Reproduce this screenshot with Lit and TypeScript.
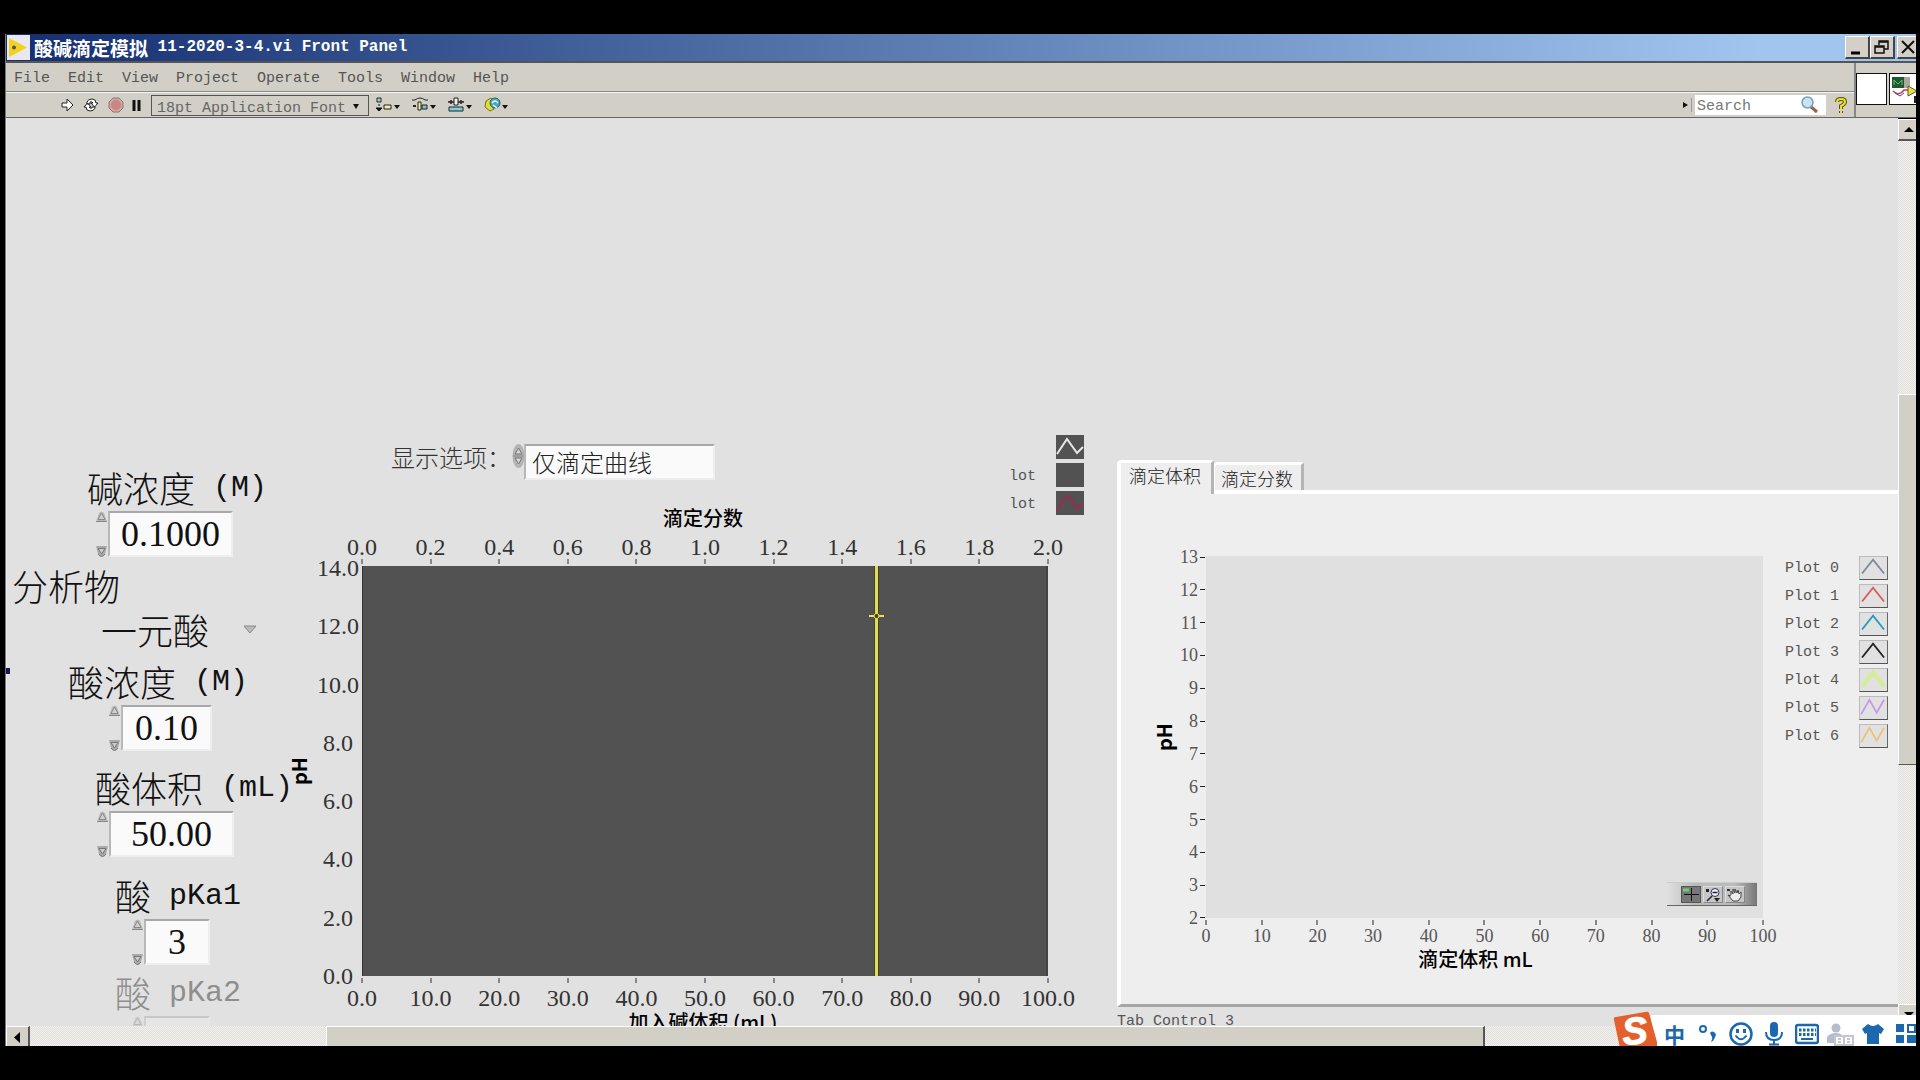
import { LitElement, html, css, svg } from "lit";
import { customElement, property } from "lit/decorators.js";

const range = (n: number) => Array.from({ length: n }, (_, i) => i);

const shared = css`
  :host, * { box-sizing: border-box; }
  button, input, select {
    margin: 0; padding: 0; border: 0; border-radius: 0; background: none;
    color: inherit; font: inherit; appearance: none; outline: none;
  }
  button { display: block; }
  svg { display: block; }
`;

/* Numeric control: label, increment buttons and value box. */
@customElement("numeric-control")
export class NumericControl extends LitElement {
  @property() zh = "";
  @property() unit = "";
  @property() value = "";
  @property({ type: Boolean }) disabled = false;

  static styles = [shared, css`
    :host { display: block; color: #111; }
    :host([disabled]) { color: #8e8e8e; }
    .label {
      display: flex; height: 44px; white-space: pre;
      font: 300 36px/40px "Noto Sans CJK SC", sans-serif;
    }
    .unit { font: 30px/42px "Liberation Mono", monospace; }
    .row { display: flex; margin-left: var(--indent, 8px); }
    .spin { display: flex; flex-direction: column; justify-content: space-between; width: 13px; height: 46px; }
    .box {
      width: var(--box, 125px); height: 46px; text-align: center;
      background: #fafafa; border: 2px solid #eee; border-top-color: #a8a8a8; border-left-color: #b8b8b8;
      font: 36px/42px "Liberation Serif", serif;
    }
    :host([disabled]) .row { opacity: 0.45; }
    :host([disabled]) .box { background: #ededed; }
  `];

  render() {
    return html`
      <label class="label" for="v">${this.zh}<span class="unit">${this.unit}</span></label>
      <div class="row">
        <div class="spin">
          <button aria-label="Increment" ?disabled=${this.disabled}>
            <svg width="13" height="11"><path d="M1 11L4 2Q6.500-1 9 2L12 11Z" fill="#b8b8b8"/><path d="M3 8.500L6.500 2L10 8.500Z" fill="#d0d0d0" stroke="#888"/><path d="M1 10.500H12" stroke="#888"/></svg>
          </button>
          <button aria-label="Decrement" ?disabled=${this.disabled}>
            <svg width="13" height="11"><path d="M1 0H12L10 8Q6.500 13 3 8Z" fill="#aaa"/><path d="M3 2.500H10L6.500 8Z" fill="#ccc" stroke="#777"/><path d="M10 8Q6.500 13 3 8" fill="none" stroke="#777"/></svg>
          </button>
        </div>
        <input class="box" id="v" .value=${this.value} ?disabled=${this.disabled} />
      </div>`;
  }
}

/* Main titration graph with a top and a bottom scale. */
@customElement("titration-graph")
export class TitrationGraph extends LitElement {
  static styles = [shared, css`
    :host { display: block; min-width: 0; padding-top: 317px; color: #333; }
    .head { display: flex; justify-content: space-between; height: 71px; padding: 0 33px 0 110px; }
    .option { display: flex; padding-top: 8px; }
    .option label { width: 121px; font: 300 24px/28px "Noto Sans CJK SC", sans-serif; white-space: nowrap; }
    .option svg { margin-right: -1px; }
    .ring {
      width: 191px; height: 36px; padding-left: 6px; margin-top: 1px; color: #222;
      background: #fafafa; border: 2px solid #eee; border-top-color: #a8a8a8; border-left-color: #b8b8b8;
      font: 300 24px/32px "Noto Sans CJK SC", sans-serif;
    }
    .legend { display: grid; grid-template-columns: 47px 28px; grid-auto-rows: 24px; row-gap: 4px; font: 15px/28px "Liberation Mono", monospace; color: #555; }
    .swatch { height: 24px; background: #525252; }
    .title { text-align: center; color: #000; font: 500 20px/24px "Noto Sans CJK SC", sans-serif; white-space: nowrap; padding: 0 73px 0 81px; }
    .title.top { height: 29px; }
    .scale { display: flex; justify-content: space-between; margin: 0 69px 0 81px; font: 24px/24px "Liberation Serif", serif; }
    .mark { display: flex; flex-direction: column; align-items: center; width: 0; white-space: nowrap; }
    .tick { width: 2px; height: 5px; flex: none; background: #888; }
    .scale.top { padding-bottom: 2px; }
    .scale.bottom { padding-top: 2px; }
    .scale.bottom .tick { margin-bottom: 3px; }
    .body { display: grid; grid-template-columns: 36px 42px 1fr; padding-right: 69px; height: 410px; }
    .ph { display: flex; align-items: center; justify-content: center; }
    .ph span { writing-mode: vertical-rl; transform: rotate(180deg); color: #000; font: 700 20px/24px "Noto Sans CJK SC", sans-serif; }
    .ys { display: flex; flex-direction: column; justify-content: space-between; padding-top: 2px; font: 24px/24px "Liberation Serif", serif; }
    .y { height: 0; display: flex; align-items: center; justify-content: center; white-space: nowrap; }
    .plot { margin-left: 3px; background: #525252; border-left: 1px solid #333; border-right: 2px solid #444; display: grid; grid-template-columns: 3fr 1fr; }
    .cursor { display: flex; justify-content: flex-end; }
    .line { width: 5px; margin-right: -4px; background: #e0dc62; border: solid #45431c; border-width: 0 1px; padding-top: 45px; display: flex; justify-content: center; align-items: flex-start; }
    .line svg { flex: none; }
  `];

  render() {
    return html`
      <div class="head">
        <div class="option">
          <label for="display">显示选项：</label>
          <svg width="13" height="26"><ellipse cx="6.500" cy="13" rx="6" ry="12" fill="#b4b4b4"/><path d="M6.500 5L10 11H3ZM6.500 21L10 15H3Z" fill="#d5d5d5" stroke="#777"/><path d="M1 13H12" stroke="#888"/></svg>
          <select class="ring" id="display"><option>仅滴定曲线</option></select>
        </div>
        <div class="legend">
          <span></span>
          <svg class="swatch" width="28" height="24"><path d="M1 19L11 4L21 18L27 12" fill="none" stroke="#e8e8e8" stroke-width="2"/></svg>
          <span>lot</span><div class="swatch"></div>
          <span>lot</span>
          <svg class="swatch" width="28" height="24"><path d="M1 20L6 11L12 5L21 17L27 13" fill="none" stroke="#863750" stroke-width="3"/></svg>
        </div>
      </div>
      <div class="title top">滴定分数</div>
      <div class="scale top">${range(11).map(i => html`<div class="mark"><span>${(i * 0.2).toFixed(1)}</span><i class="tick"></i></div>`)}</div>
      <div class="body">
        <div class="ph"><span>pH</span></div>
        <div class="ys">${range(8).map(i => html`<div class="y">${(14 - i * 2).toFixed(1)}</div>`)}</div>
        <div class="plot"><div class="cursor"><div class="line">
          <svg width="15" height="10"><path d="M0 5H15" stroke="#e8e45a" stroke-width="2"/><circle cx="7.500" cy="5" r="2.500" fill="#45431c" stroke="#e8e45a"/></svg>
        </div></div></div>
      </div>
      <div class="scale bottom">${range(11).map(i => html`<div class="mark"><i class="tick"></i><span>${(i * 10).toFixed(1)}</span></div>`)}</div>
      <div class="title">加入碱体积 (mL)</div>`;
  }
}

const PLOTS = [
  { color: "#8088a0", width: 2, d: "M3 19L15 4L27 19" },
  { color: "#dd5a5a", width: 2, d: "M3 19L15 4L27 19" },
  { color: "#1f9cc0", width: 2, d: "M3 19L15 4L27 19" },
  { color: "#222222", width: 2, d: "M3 19L15 4L27 19" },
  { color: "#d3ec9e", width: 5, d: "M3 20L15 5L27 20" },
  { color: "#c59be8", width: 2, d: "M2 20L11 4L19 18L27 4" },
  { color: "#ecc27a", width: 2, d: "M2 20L11 4L19 18L27 4" },
];

/* Tab control holding the second graph. */
@customElement("tab-panel")
export class TabPanel extends LitElement {
  static styles = [shared, css`
    :host { display: block; min-width: 0; padding-top: 342px; color: #555; }
    .tabs { display: flex; align-items: flex-end; height: 34px; font: 300 18px/20px "Noto Sans CJK SC", sans-serif; color: #222; }
    .tab { background: #eee; border: 3px solid #fff; border-bottom: 0; border-right-color: #b4b4b4; border-radius: 4px 3px 0 0; white-space: nowrap; }
    .tab.on { width: 97px; height: 34px; padding: 0 6px 8px 4px; border-left-width: 4px; align-self: flex-start; }
    .tab.off { width: 90px; height: 28px; padding-right: 2px; margin-bottom: 4px; border-left-width: 1px; }
    .strip { display: flex; margin-top: -4px; padding-left: 97px; height: 4px; }
    .strip i { flex: 1; background: #fff; }
    .panel { height: 513px; padding-top: 62px; background: #eee; border-left: 4px solid #fff; border-bottom: 3px solid #a6a6a6; display: grid; grid-template-columns: 85px minmax(0, 1fr) 135px; }
    .name { padding-top: 5px; font: 15px/20px "Liberation Mono", monospace; }
    .left { display: grid; grid-template-columns: 1fr 26px; height: 362px; }
    .ph { display: flex; align-items: center; justify-content: center; padding-left: 26px; }
    .ph span { writing-mode: vertical-rl; transform: rotate(180deg); color: #000; font: 700 20px/24px "Noto Sans CJK SC", sans-serif; }
    .ys { display: flex; flex-direction: column; justify-content: space-between; padding-top: 1px; font: 18px/18px "Liberation Serif", serif; }
    .y { display: flex; align-items: center; justify-content: flex-end; height: 0; gap: 2px; padding-right: 1px; }
    .y i { width: 5px; height: 1px; background: #222; }
    .plot { height: 362px; background: #e0e0e0; display: flex; align-items: flex-end; justify-content: flex-end; padding: 0 6px 12px; }
    .palette { display: flex; align-items: center; gap: 2px; width: 90px; height: 24px; padding-left: 14px; background: linear-gradient(90deg, #e0e0e0, #bbb 30%, #bbb 75%, #777); border-bottom: 1px solid #666; border-top: 1px solid #ccc; }
    .tool { width: 20px; height: 17px; background: #c6c6c6; border: 1px solid #ddd; border-right-color: #888; border-bottom-color: #888; }
    .tool.on { background: #777; border-color: #555; }
    .scale { display: flex; justify-content: space-between; padding-top: 2px; font: 18px/20px "Liberation Serif", serif; }
    .mark { display: flex; flex-direction: column; align-items: center; width: 0; white-space: nowrap; }
    .mark i { width: 2px; height: 5px; margin-bottom: 1px; background: #888; }
    .title { text-align: center; color: #000; font: 500 20px/26px "Noto Sans CJK SC", sans-serif; white-space: nowrap; padding-right: 18px; }
    .legend { display: grid; align-content: start; grid-template-columns: 74px 29px; grid-auto-rows: 24px; row-gap: 4px; padding-left: 22px; font: 15px/26px "Liberation Mono", monospace; white-space: pre; }
    .swatch { background: #e1e1e1; border: 1px solid #bbb; border-right-color: #666; border-bottom-color: #555; }
  `];

  render() {
    return html`
      <div class="tabs" role="tablist">
        <button class="tab on" role="tab" aria-selected="true">滴定体积</button>
        <button class="tab off" role="tab" aria-selected="false">滴定分数</button>
      </div>
      <div class="strip"><i></i></div>
      <div class="panel">
        <div class="left">
          <div class="ph"><span>pH</span></div>
          <div class="ys">${range(12).map(i => html`<div class="y"><span>${13 - i}</span><i></i></div>`)}</div>
        </div>
        <div>
          <div class="plot">
            <div class="palette">
              <button class="tool on" aria-label="Cursor"><svg width="18" height="15"><path d="M1 3H7" stroke="#6fd06f" stroke-width="3"/><path d="M2 7.500H17M9.500 1V14" stroke="#111"/></svg></button>
              <button class="tool" aria-label="Zoom"><svg width="18" height="15"><circle cx="11" cy="5.500" r="4" fill="#eef" stroke="#335"/><path d="M8.500 5.500H13.500M8 9L3 14" stroke="#223" stroke-width="1.500"/><path d="M2 2H5V5H2ZM10 11H16L13 15Z" fill="#222"/></svg></button>
              <button class="tool" aria-label="Pan"><svg width="18" height="15"><path d="M5 8V4L7 7V2L9 6V2L11 6L12 3L13 7L15 5V10L12 14H7L2 8L5 9" fill="#eee" stroke="#444"/><path d="M1 2H4V4H1Z" fill="#333"/></svg></button>
            </div>
          </div>
          <div class="scale">${range(11).map(i => html`<div class="mark"><i></i><span>${i * 10}</span></div>`)}</div>
          <div class="title">滴定体积 mL</div>
        </div>
        <div class="legend">${PLOTS.map((p, i) => html`<span>Plot ${i}</span><svg class="swatch" width="29" height="24" viewBox="1 1 29 24">${svg`<path d=${p.d} fill="none" stroke=${p.color} stroke-width=${p.width}/>`}</svg>`)}</div>
      </div>
      <div class="name">Tab Control 3</div>`;
  }
}

/* Input-method status bar lying over the window corner. */
@customElement("ime-bar")
export class ImeBar extends LitElement {
  static styles = [shared, css`
    :host { display: flex; width: 303px; height: 35px; overflow: hidden; align-items: flex-end; }
    .logo { flex: none; width: 45px; height: 35px; position: relative; z-index: 1; }
    .letter { font: italic 700 38px "Liberation Sans", sans-serif; }
    .cells { flex: none; display: flex; height: 31px; margin-left: -7px; padding-left: 7px; background: #fff; }
    .cell { width: 33px; height: 31px; display: flex; align-items: center; justify-content: center; padding-top: 6px; }
    .zh { color: #1b68ae; font: 700 21px/24px "Noto Sans CJK SC", sans-serif; }
  `];

  render() {
    const b = "#1b68ae";
    return html`
      <svg class="logo" viewBox="0 0 45 35">
        <path d="M3 6Q0 6 1 9L7 37H44V31L36 2Q35 0 32 1Z" fill="#e3602c"/>
        <text class="letter" x="9" y="33" fill="#fff" stroke="#fff" transform="rotate(-6 22 20)">S</text>
      </svg>
      <div class="cells">
        <button class="cell zh">中</button>
        <button class="cell" aria-label="Punctuation"><svg width="22" height="24"><circle cx="6" cy="7" r="3" fill="none" stroke=${b} stroke-width="2"/><path d="M13 11a3 3 0 1 1 5 4q-1 4-4 5q2-3 1-5z" fill=${b}/></svg></button>
        <button class="cell" aria-label="Emoji"><svg width="24" height="24"><circle cx="12" cy="12" r="10.500" fill="none" stroke=${b} stroke-width="2.500"/><path d="M8.500 7V11M15.500 7V11" stroke=${b} stroke-width="3"/><path d="M6.500 13.500Q12 21 17.500 13.500" fill="none" stroke=${b} stroke-width="2"/></svg></button>
        <button class="cell" aria-label="Voice"><svg width="20" height="24"><rect x="6" y="0" width="8" height="15" rx="4" fill=${b}/><path d="M2 10Q2 18 10 18Q18 18 18 10M10 18V22M5 22.500H15" fill="none" stroke=${b} stroke-width="2"/></svg></button>
        <button class="cell" aria-label="Keyboard"><svg width="24" height="24"><rect x="1" y="3" width="22" height="18" rx="2" fill="none" stroke=${b} stroke-width="2.500"/><path d="M4 8H21M4 12.500H21" stroke=${b} stroke-width="3" stroke-dasharray="2.500 1.500"/><path d="M6 17H18" stroke=${b} stroke-width="2"/></svg></button>
        <button class="cell" aria-label="Account"><svg width="28" height="24"><circle cx="10" cy="6" r="4.500" fill="#b4bccd"/><path d="M1 21V15Q4 11 10 11Q14 11 16 13V21Z" fill="#b4bccd"/><path d="M9 14H17L18 15L19 14H27V23H9ZM18 15V23M12 17H15M21 17H24M12 20H15M21 20H24" fill="#fff" stroke="#c0c6d2" stroke-width="2"/></svg></button>
        <button class="cell" aria-label="Skin"><svg width="22" height="24"><path d="M6 2Q11 6 16 2L22 7L19 12L17 11V22H5V11L3 12L0 7Z" fill=${b}/></svg></button>
        <button class="cell" aria-label="Toolbox"><svg width="22" height="24"><path d="M1 2H9V10H1ZM1 13H9V21H1ZM12 13H22V21H12Z" fill=${b}/><rect x="13" y="3" width="7" height="7" fill="none" stroke=${b} stroke-width="2"/></svg></button>
      </div>`;
  }
}

@customElement("app-root")
export class AppRoot extends LitElement {
  static styles = [shared, css`
    :host { display: flex; flex-direction: column; height: 100vh; padding: 34px 4px 34px 5px; background: #000; overflow: hidden; }
    .window { position: relative; flex: 1; min-height: 0; display: flex; flex-direction: column; overflow: hidden; border-left: 1px solid #777; }
    .title { display: flex; align-items: center; height: 27px; flex: none; padding-left: 1px; background: linear-gradient(90deg, #142e70, #a0c6f0 92%); color: #fff; }
    .app-icon { flex: none; margin-right: 4px; }
    .title h1 { flex: 1; display: flex; margin: 0; font: 700 19px/25px "Noto Sans CJK SC", sans-serif; white-space: pre; }
    .title .en { font: 700 16px/25px "Liberation Mono", monospace; }
    .wbtn { width: 25px; height: 23px; background: #d4d0c8; border: 1px solid #fff; border-right: 2px solid #444; border-bottom: 2px solid #444; }
    .wbtn.close { margin: 0 -6px 0 2px; }
    .bars { display: flex; height: 57px; flex: none; background: #d2cfc7; border-top: 2px solid #555; border-bottom: 1px solid #666; color: #444; }
    .main { flex: 1; min-width: 0; display: flex; flex-direction: column; border-right: 2px solid #888; }
    .menu { display: flex; gap: 18px; height: 29px; padding-left: 8px; border-bottom: 1px solid #888; }
    .menu button { padding-top: 2px; color: #555; font: 15px/28px "Liberation Mono", monospace; }
    .tools { display: flex; align-items: center; height: 25px; border-top: 1px solid #f4f4f4; padding-left: 55px; }
    .tools > svg, .tools button { flex: none; }
    .tbtn { margin-right: 9px; }
    .tbtn.narrow { margin-right: 8px; }
    .tbtn.wide { margin-right: 12px; }
    .font { width: 218px; height: 21px; margin-right: 7px; border: 1px solid #555; overflow: hidden; display: flex; }
    .font select { flex: none; width: 216px; height: 26px; padding-left: 5px; font: 15px/26px "Liberation Mono", monospace; color: #666; }
    .font svg { margin: 7px 6px 0 -16px; flex: none; }
    .space { flex: 1; }
    .search { display: flex; align-items: center; width: 131px; height: 20px; margin-right: 9px; background: #fff; }
    .search input { flex: 1; min-width: 0; padding: 3px 0 0 2px; font: 15px/17px "Liberation Mono", monospace; }
    .search input::placeholder { color: #777; opacity: 1; }
    .search svg { margin-right: 6px; }
    .help { margin-right: 7px; }
    .side { display: flex; align-items: flex-start; gap: 2px; width: 60px; padding-top: 10px; overflow: hidden; }
    .pane { flex: none; width: 31px; height: 32px; background: #fff; border: 1px solid #111; }
    .work { flex: 1; min-height: 0; display: flex; }
    .canvas { flex: 1; min-width: 0; overflow: hidden; display: grid; grid-template-columns: 274px minmax(0, 836fr) minmax(0, 781fr); background: #e1e1e1; border-left: 1px solid #eee; }
    .controls { padding-top: 349px; }
    .c1 { margin: 0 0 7px 80px; }
    .c2 { margin: 0 0 16px 61px; --indent: 40px; --box: 91px; }
    .c3 { margin: 0 0 18px 88px; --indent: 1px; }
    .c4 { margin: 0 0 7px 108px; --indent: 16px; --box: 66px; }
    .analyte { margin-bottom: 9px; color: #111; font: 300 36px/42px "Noto Sans CJK SC", sans-serif; }
    .analyte label { display: block; height: 44px; padding-left: 5px; }
    .pick { display: flex; align-items: center; height: 44px; padding-left: 94px; }
    .pick select { width: 142px; height: 40px; margin-bottom: 4px; }
    .track { background-color: #eceae6; background-image: repeating-conic-gradient(#e2dfda 0 25%, #f2f0ee 0 50%); background-size: 2px 2px; }
    .thumb { background: #d2cfc7; border: 1px solid #fff; border-right: 2px solid #555; border-bottom: 1px solid #555; }
    .vbar { width: 18px; flex: none; display: flex; flex-direction: column; overflow: hidden; padding-top: 1px; }
    .vbar button, .hbar button { flex: none; background: #d4d0c8; border: 1px solid #fff; border-right: 2px solid #555; border-bottom: 2px solid #555; }
    .vbar button { width: 23px; height: 22px; }
    .vbar .a { flex: 253; } .vbar .b { flex: 370; width: 20px; } .vbar .c { flex: 239; }
    .hbar { height: 20px; flex: none; display: flex; overflow: hidden; }
    .hbar button { width: 24px; height: 22px; }
    .hbar .a { flex: 296; } .hbar .b { flex: 1158; height: 24px; } .hbar .c { flex: 431; }
    .handle { position: absolute; left: 0; top: 634px; width: 4px; height: 6px; background: #15155a; }
    ime-bar { position: absolute; right: 0; bottom: 0; }
  `];

  render() {
    const caret = svg`<path d="M18 9H24L21 13Z" fill="#111"/>`;
    return html`
      <div class="window">
        <header class="title">
          <svg class="app-icon" width="23" height="25"><rect width="23" height="25" fill="#e8e8ee"/><path d="M2 3L20 12.500L2 22Z" fill="#f3d21c"/><circle cx="7" cy="12.500" r="2" fill="#555"/></svg>
          <h1>酸碱滴定模拟<span class="en"> 11-2020-3-4.vi Front Panel</span></h1>
          <button class="wbtn" aria-label="Minimize"><svg width="22" height="20"><path d="M5 16H14" stroke="#000" stroke-width="3"/></svg></button>
          <button class="wbtn" aria-label="Restore"><svg width="22" height="20"><path d="M8 8V4H17V12H13M8 5H17M4 9H13V16H4ZM4 10H13" fill="none" stroke="#111" stroke-width="1.500"/></svg></button>
          <button class="wbtn close" aria-label="Close"><svg width="22" height="20"><path d="M4 4L16 16M16 4L4 16" stroke="#111" stroke-width="2"/></svg></button>
        </header>
        <div class="bars">
          <div class="main">
            <nav class="menu">${["File", "Edit", "View", "Project", "Operate", "Tools", "Window", "Help"].map(m => html`<button>${m}</button>`)}</nav>
            <div class="tools">
              <button class="tbtn" aria-label="Run"><svg width="13" height="14"><path d="M1 5H6V1L12 7L6 13V9H1Z" fill="#fff" stroke="#222"/></svg></button>
              <button class="tbtn" aria-label="Run continuously"><svg width="16" height="14"><path d="M4 6V4Q5 1 9 1Q13 1 13 5H15L11.500 9L8 5H10Q9 3 7 4V6ZM12 9V10Q11 13 7 13Q3 13 3 9H1L4.500 5L8 9H6Q7 11 9 10V9Z" fill="#fff" stroke="#222"/></svg></button>
              <button class="tbtn narrow" aria-label="Abort"><svg width="16" height="16"><path d="M5 1H11L15 5V11L11 15H5L1 11V5Z" fill="#d0a5a2" stroke="#8c7878"/><circle cx="8" cy="8" r="5" fill="#c98682"/></svg></button>
              <button class="tbtn" aria-label="Pause"><svg width="10" height="12"><path d="M2 1V12M7 1V12" stroke="#111" stroke-width="3"/></svg></button>
              <div class="font">
                <select aria-label="Text settings"><option>18pt Application Font</option></select>
                <svg width="10" height="8"><path d="M1 1H7L4 6Z" fill="#111"/></svg>
              </div>
              <button class="tbtn wide" aria-label="Align objects"><svg width="24" height="18">${svg`<path d="M1 2H5V6H1Z" fill="#9fd4e0" stroke="#222"/><path d="M3 8V10M0 12H6L3 15Z" fill="#111" stroke="#111"/><path d="M8 9H15V13H8Z" fill="#f0eea0" stroke="#222"/>`}${caret}</svg></button>
              <button class="tbtn wide" aria-label="Distribute objects"><svg width="24" height="18">${svg`<path d="M0 4H3Q8 0 13 4H16" fill="none" stroke="#222"/><path d="M6 6H9V14H6Z" fill="#f0eea0" stroke="#222"/><path d="M10 9H15V13H10Z" fill="#7cc3d0" stroke="#222"/><path d="M1 9H4V11H1Z" fill="#222"/>`}${caret}</svg></button>
              <button class="tbtn wide" aria-label="Resize objects"><svg width="24" height="18">${svg`<path d="M0 6H16M3 4V8M13 4V8" stroke="#222" stroke-width="1.500"/><path d="M6 2H10V9H6Z" fill="#eee" stroke="#222"/><path d="M1 11H15V15H1Z" fill="#7cd0de" stroke="#222"/>`}${caret}</svg></button>
              <button class="tbtn wide" aria-label="Reorder"><svg width="25" height="18">${svg`<path d="M2 5L7 2L9 5L7 9L10 13L6 15L1 11Z" fill="#e0dc3c" stroke="#777410"/><circle cx="11" cy="7" r="5" fill="#4fa5b8" stroke="#24606e"/><path d="M8 7Q11 3 14 7M9 9L13 12" fill="none" stroke="#dff" stroke-width="1.500"/>`}${caret}</svg></button>
              <span class="space"></span>
              <svg width="12" height="16"><path d="M0 5L5 8L0 11Z" fill="#111"/><path d="M8.500 1V15" stroke="#999"/></svg>
              <div class="search">
                <input aria-label="Search" placeholder="Search" />
                <svg width="20" height="18"><path d="M10 10L17 16" stroke="#9a6350" stroke-width="3"/><circle cx="7.500" cy="6.500" r="5.500" fill="#c5e4f4" stroke="#7b9fb5" stroke-width="1.500"/></svg>
              </div>
              <button class="help" aria-label="Help"><svg width="12" height="17"><path d="M2 5Q2 2 6 2Q10 2 10 5Q10 7 6 9V12M6 14V16" fill="none" stroke="#57530c" stroke-width="4"/><path d="M2 5Q2 2 6 2Q10 2 10 5Q10 7 6 9V12M6 14V16" fill="none" stroke="#eee02c" stroke-width="2"/></svg></button>
            </div>
          </div>
          <div class="side">
            <div class="pane"></div>
            <div class="pane"><svg width="29" height="30"><rect x="2" y="3" width="12" height="11" fill="#1e5a30"/><path d="M4 11V6L8 10L12 6V11" fill="none" stroke="#64c070"/><rect x="14" y="3" width="6" height="11" fill="#aaa89a"/><path d="M3 17Q9 23 14 16L19 16" fill="none" stroke="#c83c3c" stroke-width="1.500"/><path d="M18 12L27 17L18 22Z" fill="#f0e030" stroke="#555"/><path d="M5 19L10 22L14 19" fill="none" stroke="#44a"/><path d="M25 22V29" stroke="#222" stroke-width="2"/></svg></div>
          </div>
        </div>
        <div class="work">
          <main class="canvas">
            <section class="controls">
              <numeric-control class="c1" zh="碱浓度" unit=" (M)" value="0.1000"></numeric-control>
              <div class="analyte">
                <label for="analyte">分析物</label>
                <div class="pick">
                  <select id="analyte"><option>一元酸</option></select>
                  <svg width="14" height="10"><path d="M1 1H13L7 8Z" fill="#bbb" stroke="#888"/></svg>
                </div>
              </div>
              <numeric-control class="c2" zh="酸浓度" unit=" (M)" value="0.10"></numeric-control>
              <numeric-control class="c3" zh="酸体积" unit=" (mL)" value="50.00"></numeric-control>
              <numeric-control class="c4" zh="酸" unit=" pKa1" value="3"></numeric-control>
              <numeric-control class="c4" zh="酸" unit=" pKa2" value="" disabled></numeric-control>
            </section>
            <titration-graph></titration-graph>
            <tab-panel></tab-panel>
          </main>
          <div class="vbar">
            <button aria-label="Scroll up"><svg width="20" height="19"><path d="M5 12H15L10 7Z" fill="#000"/></svg></button>
            <div class="track a"></div><div class="thumb b"></div><div class="track c"></div>
            <button aria-label="Scroll down"><svg width="20" height="19"><path d="M5 7H15L10 12Z" fill="#000"/></svg></button>
          </div>
        </div>
        <div class="hbar">
          <button aria-label="Scroll left"><svg width="21" height="19"><path d="M13 5V16L7 10.500Z" fill="#000"/></svg></button>
          <div class="track a"></div><div class="thumb b"></div><div class="track c"></div>
        </div>
        <i class="handle"></i>
        <ime-bar></ime-bar>
      </div>`;
  }
}
